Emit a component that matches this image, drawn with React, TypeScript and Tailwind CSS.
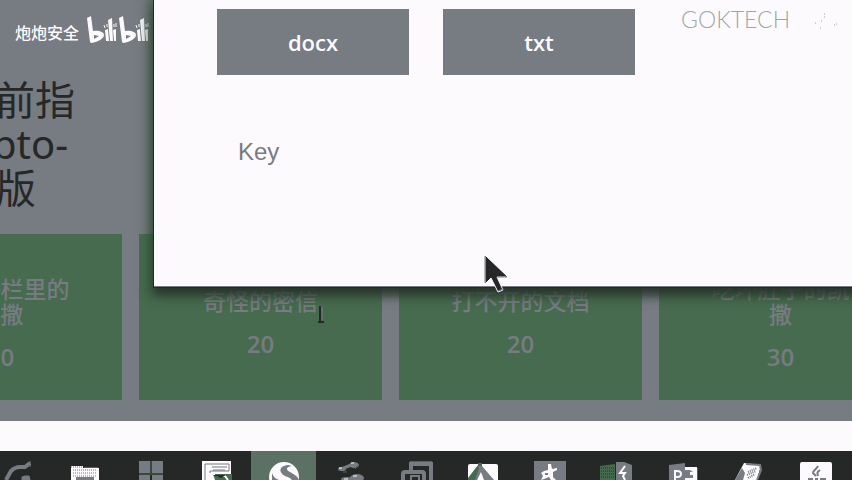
import type { ReactNode } from 'react'

type Challenge = { lines: string[]; points: number }

const challenges: Challenge[] = [
  { lines: ['困在栅栏里的', '凯撒'], points: 20 },
  { lines: ['奇怪的密信'], points: 20 },
  { lines: ['打不开的文档'], points: 20 },
  { lines: ['吃坏肚子的凯', '撒'], points: 30 },
]

const files = ['docx', 'txt']

const G = '#777b82'
const W = '#fcfafd'
const N = '#476b4f'
const D = '#262827'

const apps: { name: string; icon: ReactNode }[] = [
  {
    name: 'Launcher',
    icon: (
      <>
        <path d="M22 29 27 20Q31 16 36 16H41L46 12" fill="none" stroke={G} strokeWidth="4" />
        <path d="M46 10v6M38 29v-3l3-1h4l1 4Z" fill={G} stroke={G} strokeWidth="1" />
      </>
    ),
  },
  {
    name: 'Files',
    icon: (
      <>
        <path d="M20 15h12v2h16v12H20Z" fill={W} />
        <path d="M20 16h11M22 19h24M22 22h24M22 25h24" stroke={G} strokeWidth="1" strokeDasharray="1 1" />
        <path d="M25 26h18v3H25Z" fill={G} />
        <path d="M33 16.500h14" stroke={N} strokeWidth="1" />
      </>
    ),
  },
  {
    name: 'Windows',
    icon: (
      <>
        <path d="M22 10h11v12H22ZM35 10h11v12H35ZM22 24h11v5H22ZM35 24h11v5H35Z" fill={G} />
        <path d="M34 10v12M22 23h24" stroke={N} strokeWidth="1" />
      </>
    ),
  },
  {
    name: 'Registry',
    icon: (
      <>
        <path d="M18 10h29v16h-4v3H18Z" fill={W} />
        <path d="M21 29V13h24v7H26v9M28 16h15M29 19h12" fill="none" stroke={G} strokeWidth="1" />
        <path d="M29 23h19v6H31Z" fill={N} />
        <path d="M26 29v-6h5M33 25h8l3 4" fill="none" stroke={W} strokeWidth="2" />
        <path d="M29 24h13l-5 3Z" fill={D} />
      </>
    ),
  },
  {
    name: 'Browser',
    icon: (
      <>
        <circle cx="34" cy="26" r="15" fill={W} />
        <path d="M38 14C29 15 28 21 35 25 41 27 43 29 43 33H49C50 26 45 24 40 21 36 19 35 16 42 15Z" fill={G} />
        <path d="M22 22C24 28 28 29 33 30H22Z" fill={G} />
      </>
    ),
  },
  {
    name: 'Molecules',
    icon: (
      <>
        <path d="M24 18 37 13" stroke={G} strokeWidth="3" />
        <ellipse cx="25" cy="18" rx="4" ry="2" fill={G} />
        <ellipse cx="37" cy="14" rx="5" ry="3" fill={G} />
        <ellipse cx="40" cy="27" rx="7" ry="4" fill={G} />
        <ellipse cx="30" cy="28" rx="6" ry="2" fill={G} />
        <path d="M34 12h3M36 25h4M27 28h4M22 17h3" stroke={W} strokeWidth="1" />
        <path d="M41 14 38 18M26 21h4" stroke={N} strokeWidth="1" />
      </>
    ),
  },
  {
    name: 'Virtual machine',
    icon: (
      <>
        <path d="M28 20V13H48V29" fill="none" stroke={G} strokeWidth="4" />
        <rect x="20" y="21" width="21" height="16" rx="2" fill={D} stroke={G} strokeWidth="4" />
        <path d="M28 29v-4h8v4" fill="none" stroke={G} strokeWidth="2" />
        <path d="M27 10.500h22" stroke={N} strokeWidth="1" />
      </>
    ),
  },
  {
    name: 'Editor',
    icon: (
      <>
        <rect x="19" y="13" width="30" height="24" rx="2" fill={W} />
        <path d="M29 14 19 27v2h9l3-11Z" fill={N} />
        <path d="M29 14 20 20v-5l2-2Z" fill={W} />
        <path d="M29 15h4l12 14H35l-3-8-4 8h-2l4-12Z" fill={G} />
        <path d="M29 12h4v3h-4Z" fill={N} />
      </>
    ),
  },
  {
    name: 'Star tool',
    icon: (
      <>
        <path d="M18 10h32v19H18Z" fill={G} />
        <path d="M32 13h3l1 5 5-1v2l-4 2v5l3 3h-5l-2-3-5 2-3 1 2-4-2-3 3-2 4-1Z" fill={W} />
        <path d="M29 23h3" stroke={G} strokeWidth="2" />
      </>
    ),
  },
  {
    name: 'Burp',
    icon: (
      <>
        <path d="M18 15 33 13v16H18Z" fill={N} />
        <path d="M19 17h13M19 20h13M19 23h13M19 26h13" stroke={D} strokeWidth="1" strokeDasharray="1 1" />
        <path d="M34 11h8l8 3v15H34Z" fill={G} />
        <path d="m43 15-5 7h5l-2 3 2 4" fill="none" stroke={W} strokeWidth="2" />
      </>
    ),
  },
  {
    name: 'PowerPoint',
    icon: (
      <>
        <path d="M36 16h12v13H36Z" fill={W} />
        <path d="M20 14 36 12v17H20Z" fill={G} />
        <path d="M26 29v-9h2q4 0 4 3t-4 3h-2" fill="none" stroke={W} strokeWidth="2" />
        <path d="M36 19h5l3 2h-3v3h3v3h-8Z" fill={G} />
        <path d="M48.500 17v12" stroke={N} strokeWidth="1" />
      </>
    ),
  },
  {
    name: 'Notebook',
    icon: (
      <>
        <path d="m29 12 17 2-4 15H20Z" fill={W} />
        <path d="m31 13 14 1 1 5-4 10" fill="none" stroke={G} strokeWidth="2" />
        <path d="m27 17 3 5-2 7h-8Z" fill={G} />
        <path d="m33 21 9-4M32 24l9-4M33 27l7-4" stroke={G} strokeWidth="2" strokeDasharray="1 1" />
      </>
    ),
  },
  {
    name: 'Java',
    icon: (
      <>
        <rect x="18" y="11" width="32" height="26" rx="2" fill={W} />
        <path d="M36 15c-1 3-5 4-5 7l3 3M38 19c-3 2-3 3-2 6" fill="none" stroke={G} strokeWidth="2" />
        <path d="M26 28h5M33 28h3M38 28h6" stroke={G} strokeWidth="2" />
      </>
    ),
  },
]

function BiliLogo() {
  return (
    <svg role="img" aria-label="bilibili" viewBox="0 0 63 27" className="h-[27px] w-[63px] shrink-0">
      {[0, 32].map((x) => (
        <g key={x} transform={`translate(${x} 0)`} fill="#fcfafd">
          <path fillRule="evenodd" d="M0 2 4 0 6 15c6-1 11 1 11 4s-5 7-13 8L3 26ZM7 19v4l5-3Z" />
          <path d="m18 14 3-1 1 12h-3ZM21 4l4-2 1 23h-3ZM26 14l3-1v12h-2Z" />
          <path d="m17 9 1 3M20 8v3M27 8v3M29 7v4" stroke="#fcfafd" strokeWidth="1" />
        </g>
      ))}
    </svg>
  )
}

export default function App() {
  return (
    <div className="relative flex h-screen flex-col overflow-hidden bg-[#fcfafd] font-['Open_Sans','Noto_Sans_CJK_SC',sans-serif]">
      <main className="min-h-0 flex-1 overflow-hidden bg-[#777b82]">
        <header className="flex h-[78px] items-start gap-2 pt-4 pl-[15px]">
          <span className="pt-1 font-['Noto_Sans_CJK_SC',sans-serif] text-base leading-6 font-medium text-[#fcfafd]">
            炮炮安全
          </span>
          <BiliLogo />
        </header>
        <h1 className="-ml-1 flex h-[156px] flex-col font-['Noto_Sans','Noto_Sans_CJK_SC',sans-serif] text-[40px] leading-[44px] text-[#262827]">
          <span className="-ml-px">前指</span>
          <span className="-ml-1">pto-</span>
          <span>版</span>
        </h1>
        <div className="-ml-[121px] flex gap-[17px]">
          {challenges.map((c) => (
            <button
              key={c.lines[0]}
              className="flex h-[166px] w-[243px] shrink-0 flex-col items-center justify-center gap-4 bg-[#476b4f] pt-[13px] text-[#777b82]"
            >
              <span className="flex flex-col font-['Noto_Sans_CJK_SC',sans-serif] text-[23px] leading-[25px] font-medium">
                {c.lines.map((l) => (
                  <span key={l}>{l}</span>
                ))}
              </span>
              <span className="text-2xl leading-[30px] font-semibold">{c.points}</span>
            </button>
          ))}
        </div>
      </main>

      <div className="h-[30px] shrink-0" />

      <nav aria-label="Taskbar" className="h-[29px] shrink-0 overflow-hidden bg-[#262827]">
        <div className="mr-1 -ml-4 grid grid-cols-13">
          {apps.map((a) => (
            <button
              key={a.name}
              aria-label={a.name}
              className={
                a.name === 'Browser'
                  ? 'flex justify-center bg-linear-to-r from-transparent from-2% via-[#5a7163] via-2% to-[#5a7163]'
                  : 'flex justify-center'
              }
            >
              <svg viewBox="0 0 66 29" className="h-[29px] w-[66px]">
                {a.icon}
              </svg>
            </button>
          ))}
        </div>
      </nav>

      <section
        role="dialog"
        aria-label="Challenge"
        className="absolute top-0 -right-4 left-[154px] h-[287px] border-b border-[#777b82] bg-[#fcfafd] pt-[9px] pl-[63px] shadow-[0_0_0_1px_#262827,0_8px_10px_0_#262827cc,0_2px_10px_6px_#2f5a38aa]"
      >
        <div className="flex gap-[34px]">
          {files.map((f) => (
            <button key={f} className="h-[66px] w-[192px] bg-[#777b82] text-[22px] leading-8 font-semibold text-[#fcfafd]">
              {f}
            </button>
          ))}
        </div>
        <input
          aria-label="Key"
          placeholder="Key"
          className="mt-[52px] block h-[50px] w-[418px] bg-transparent px-[21px] font-['Liberation_Sans',sans-serif] text-2xl text-[#777b82] outline-none placeholder:text-[#777b82]"
        />
      </section>

      <div className="absolute top-[3px] right-[14px] flex items-center gap-5 text-[#777b82]/70">
        <span className="font-['Lato',sans-serif] text-[23px] leading-8 font-light">GOKTECH</span>
        <svg viewBox="0 0 28 20" className="h-5 w-7" aria-hidden="true">
          <path d="M5 14h1M11 12h1M10 19h1M14 5h1M14 8h1M24 16h1M26 15h1" stroke="currentColor" />
        </svg>
      </div>

      <svg viewBox="0 0 8 18" className="absolute top-[305px] left-[317px] h-[18px] w-2" aria-hidden="true">
        <path d="M3 1v15M1 17h6" stroke="#262827" strokeWidth="2" />
        <path d="M5 2v13" stroke="#777b82" />
      </svg>
      <svg viewBox="0 0 25 39" className="absolute top-[254px] left-[484px] h-[39px] w-[25px]" aria-hidden="true">
        <path d="M1 1V30L7 24 14 38 19 36 13 23H24Z" fill="#262827" stroke="#fcfafd" />
        <path d="M1 2v27M13 23h10M14 37l5-2" stroke="#777b82" />
      </svg>
    </div>
  )
}
